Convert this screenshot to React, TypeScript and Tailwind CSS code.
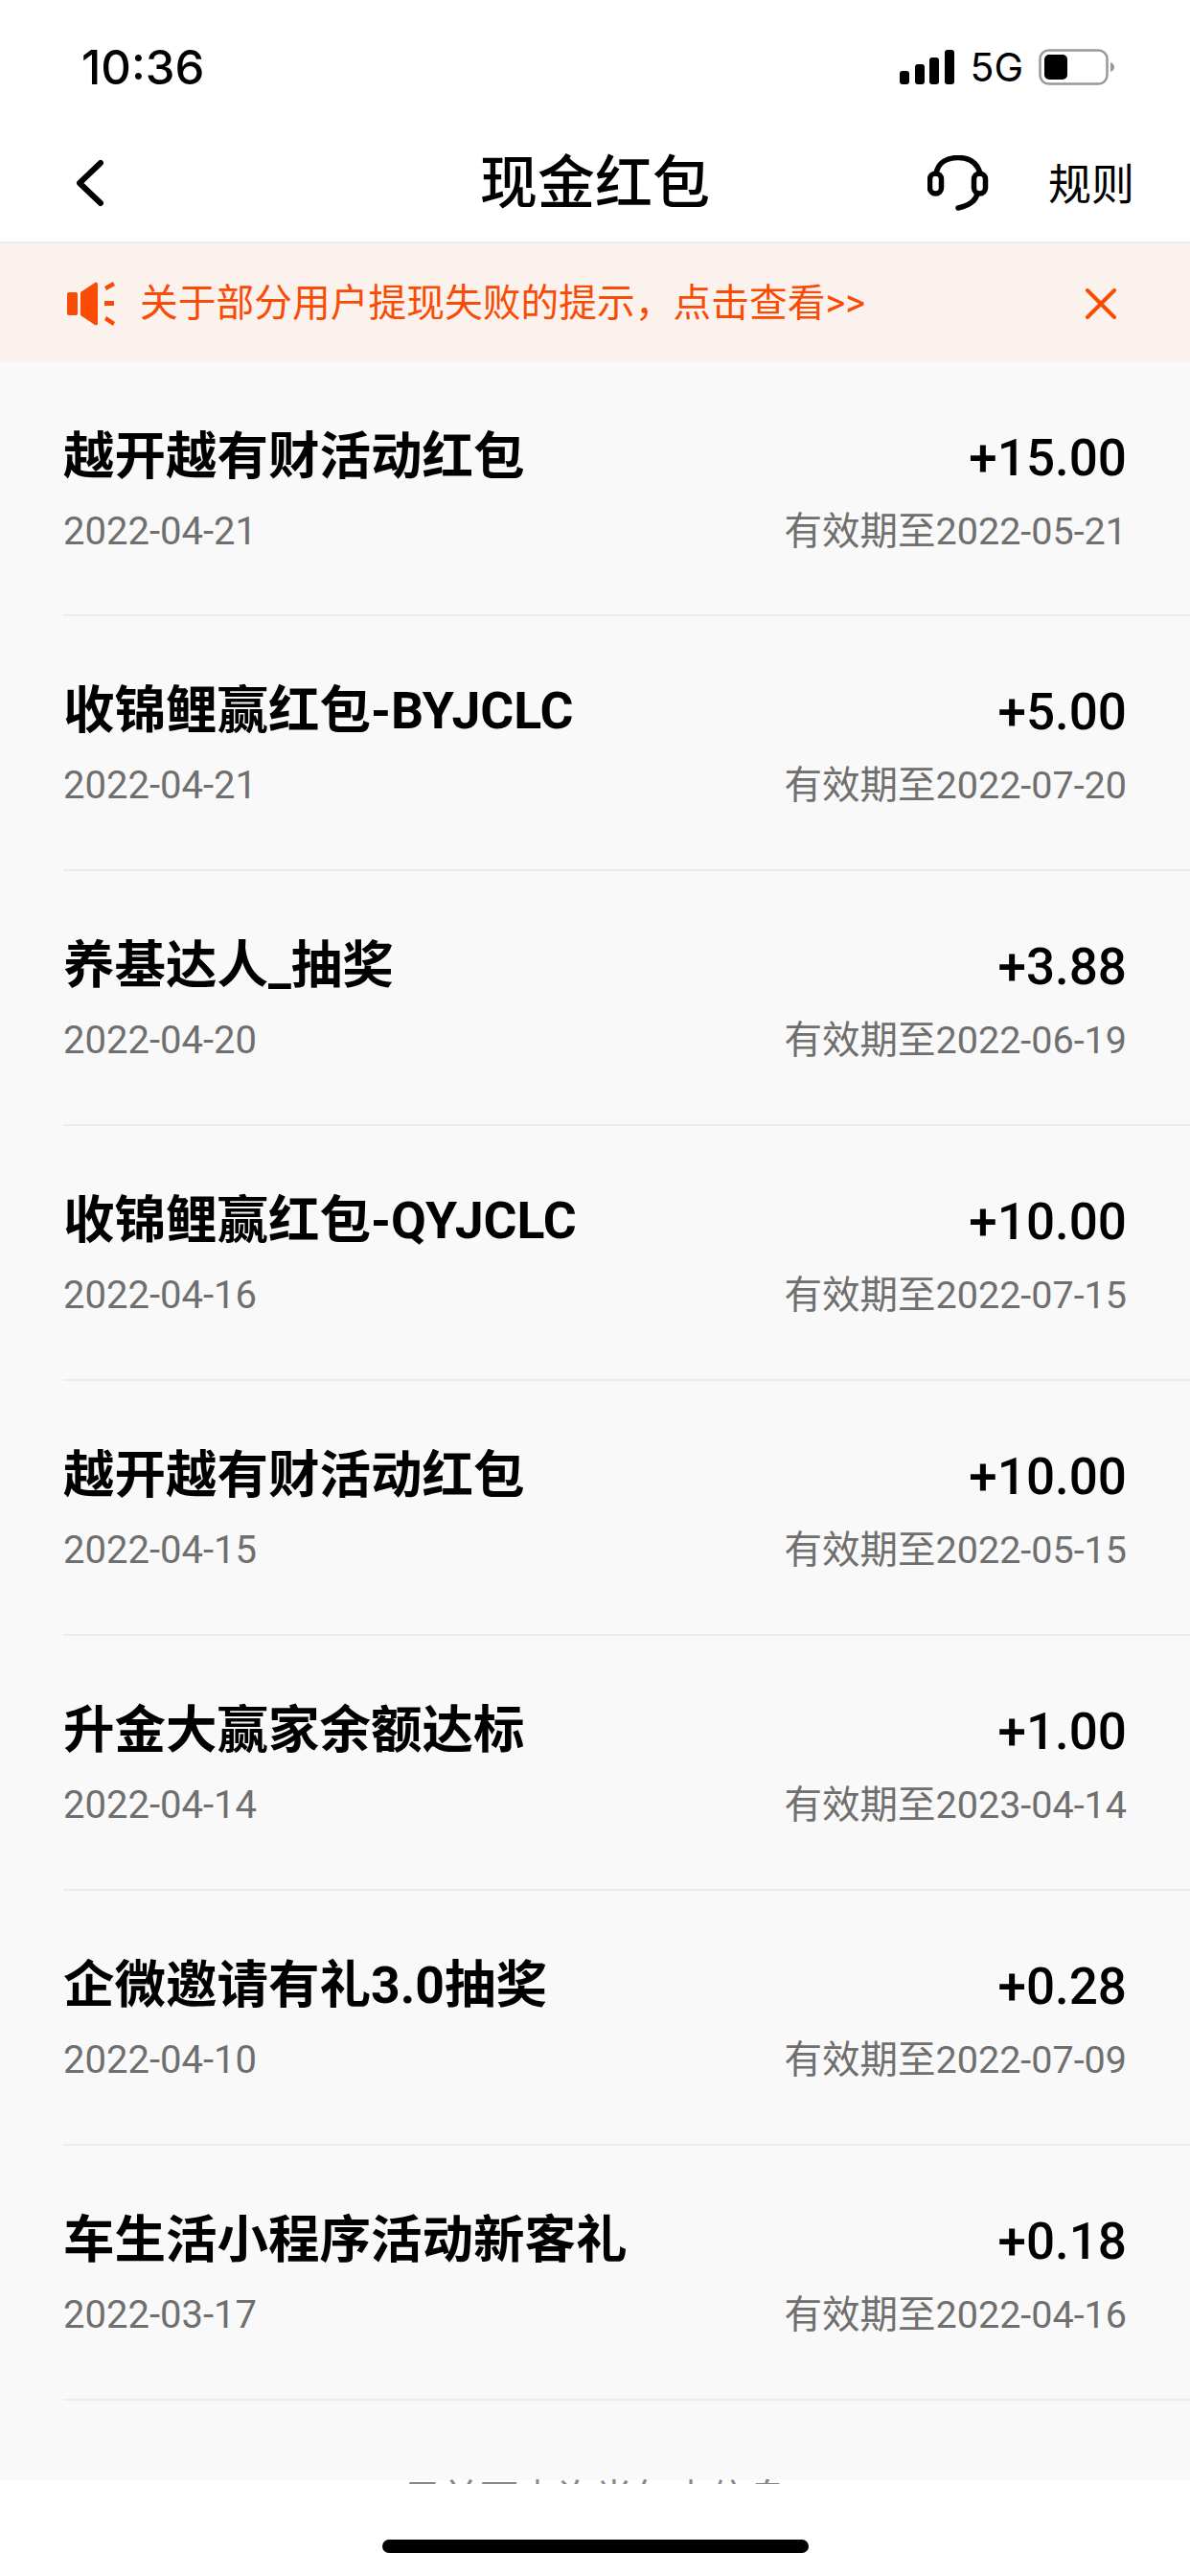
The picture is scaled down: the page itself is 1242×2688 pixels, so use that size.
const rows = [
  { title: "越开越有财活动红包", date: "2022-04-21", amount: "+15.00", expiry: "2022-05-21" },
  { title: "收锦鲤赢红包-BYJCLC", date: "2022-04-21", amount: "+5.00", expiry: "2022-07-20" },
  { title: "养基达人_抽奖", date: "2022-04-20", amount: "+3.88", expiry: "2022-06-19" },
  { title: "收锦鲤赢红包-QYJCLC", date: "2022-04-16", amount: "+10.00", expiry: "2022-07-15" },
  { title: "越开越有财活动红包", date: "2022-04-15", amount: "+10.00", expiry: "2022-05-15" },
  { title: "升金大赢家余额达标", date: "2022-04-14", amount: "+1.00", expiry: "2023-04-14" },
  { title: "企微邀请有礼3.0抽奖", date: "2022-04-10", amount: "+0.28", expiry: "2022-07-09" },
  { title: "车生活小程序活动新客礼", date: "2022-03-17", amount: "+0.18", expiry: "2022-04-16" },
];

const font = "font-['Roboto','Noto_Sans_CJK_SC',sans-serif]";

function StatusBar() {
  return (
    <div className="flex h-[130px] items-center justify-between pl-[85px] pr-[78px] pt-[10px]">
      <span className="font-['Inter',sans-serif] text-[49px] font-medium leading-none text-black">10:36</span>
      <div className="flex items-center">
        <svg width="57" height="36" viewBox="0 0 57 36" fill="#000">
          <rect x="0" y="22" width="10" height="14" rx="3" />
          <rect x="16" y="15" width="10" height="21" rx="3" />
          <rect x="31" y="8" width="10" height="28" rx="3" />
          <rect x="47" y="0" width="10" height="36" rx="3" />
        </svg>
        <span className="ml-[16px] font-['Inter',sans-serif] text-[41px] leading-none text-black">5G</span>
        <svg className="ml-[16px]" width="80" height="38" viewBox="0 0 80 38">
          <rect x="1.5" y="1.5" width="70" height="35" rx="9" fill="none" stroke="#999" strokeWidth="2.5" />
          <rect x="6" y="6" width="24" height="26" rx="5" fill="#000" />
          <path d="M75 14c3 1 4 3 4 5s-1 4-4 5z" fill="#999" />
        </svg>
      </div>
    </div>
  );
}

function Header() {
  return (
    <div className="relative flex h-[124px] items-center justify-between border-b-2 border-[#ececec] pl-[78px] pr-[58px]">
      <svg width="32" height="50" viewBox="0 0 32 50" fill="none" stroke="#000" strokeWidth="6" strokeLinecap="round" strokeLinejoin="round">
        <path d="M27 4L5 25l22 21" />
      </svg>
      <span className="absolute left-[501px] top-[27px] text-[60px] font-medium leading-[70px] text-black">现金红包</span>
      <div className="flex items-center gap-[62px]">
        <svg width="64" height="58" viewBox="0 0 64 58" fill="none" stroke="#000" strokeWidth="5.5" strokeLinecap="round">
          <path d="M9 19C11 8 20 2.5 32 2.5S52 8 55 19" />
          <rect x="2.5" y="19" width="12" height="21" rx="6" />
          <rect x="48.5" y="19" width="12" height="21" rx="6" />
          <path d="M52 40C50 48 42 53 32 55" />
        </svg>
        <span className="pt-[5px] text-[45px] leading-none text-black">规则</span>
      </div>
    </div>
  );
}

function Banner() {
  return (
    <div className="flex h-[124px] items-center justify-between bg-[#fbf2ee] pl-[70px] pr-[76px] pt-[2px]">
      <div className="flex items-center">
        <svg width="50" height="46" viewBox="0 0 50 46" fill="#fa4b05">
          <rect x="0" y="11" width="11" height="24" rx="2" />
          <path d="M14 11L29 1c2-1 3 0 3 2v40c0 2-1 3-3 2L14 35z" />
          <path d="M39 5l9-5 2 4-9 5zM39 20h10v5H39zM41 36l9 6-2 4-9-6z" />
        </svg>
        <span className="ml-[26px] text-[39.75px] leading-none text-[#fa4b05]">关于部分用户提现失败的提示，点击查看&gt;&gt;</span>
      </div>
      <svg width="34" height="32" viewBox="0 0 34 32" fill="none" stroke="#fa4b05" strokeWidth="4" strokeLinecap="round">
        <path d="M3 2l28 28M31 2L3 30" />
      </svg>
    </div>
  );
}

function Row({ title, date, amount, expiry }: { title: string; date: string; amount: string; expiry: string }) {
  return (
    <div className="ml-[66px] flex h-[266px] flex-col justify-center border-b-2 border-[#ececec] pr-[66px] pt-[4px] first:h-[265px]">
      <div className="flex items-center justify-between">
        <span className="text-[53.5px] font-bold leading-[70px] text-black">{title}</span>
        <span className="pt-[2px] text-[53px] font-medium leading-[70px] text-black">{amount}</span>
      </div>
      <div className="mt-[14px] flex items-center justify-between text-[40px] leading-[56px] text-[#6f6f6f]">
        <span>{date}</span>
        <span className="text-[39.5px]">有效期至{expiry}</span>
      </div>
    </div>
  );
}

export default function App() {
  return (
    <div className={`flex h-[2688px] w-[1242px] flex-col overflow-hidden bg-white ${font}`}>
      <StatusBar />
      <Header />
      <Banner />
      {/* list scrolls under the white footer, the next line is cut off */}
      <div className="relative h-[2214px] overflow-hidden">
        <div className="h-[2210px] bg-[#f9f9f9]">
          {rows.map((row, i) => (
            <Row key={i} {...row} />
          ))}
        </div>
        <div className="absolute left-0 top-[2207px] w-full text-center text-[40px] leading-[46px] text-[#888]">
          目前可查询半年内信息
        </div>
      </div>
      <div className="flex flex-1 justify-center bg-white pt-[58px]">
        <div className="h-[14px] w-[445px] rounded-full bg-black" />
      </div>
    </div>
  );
}
